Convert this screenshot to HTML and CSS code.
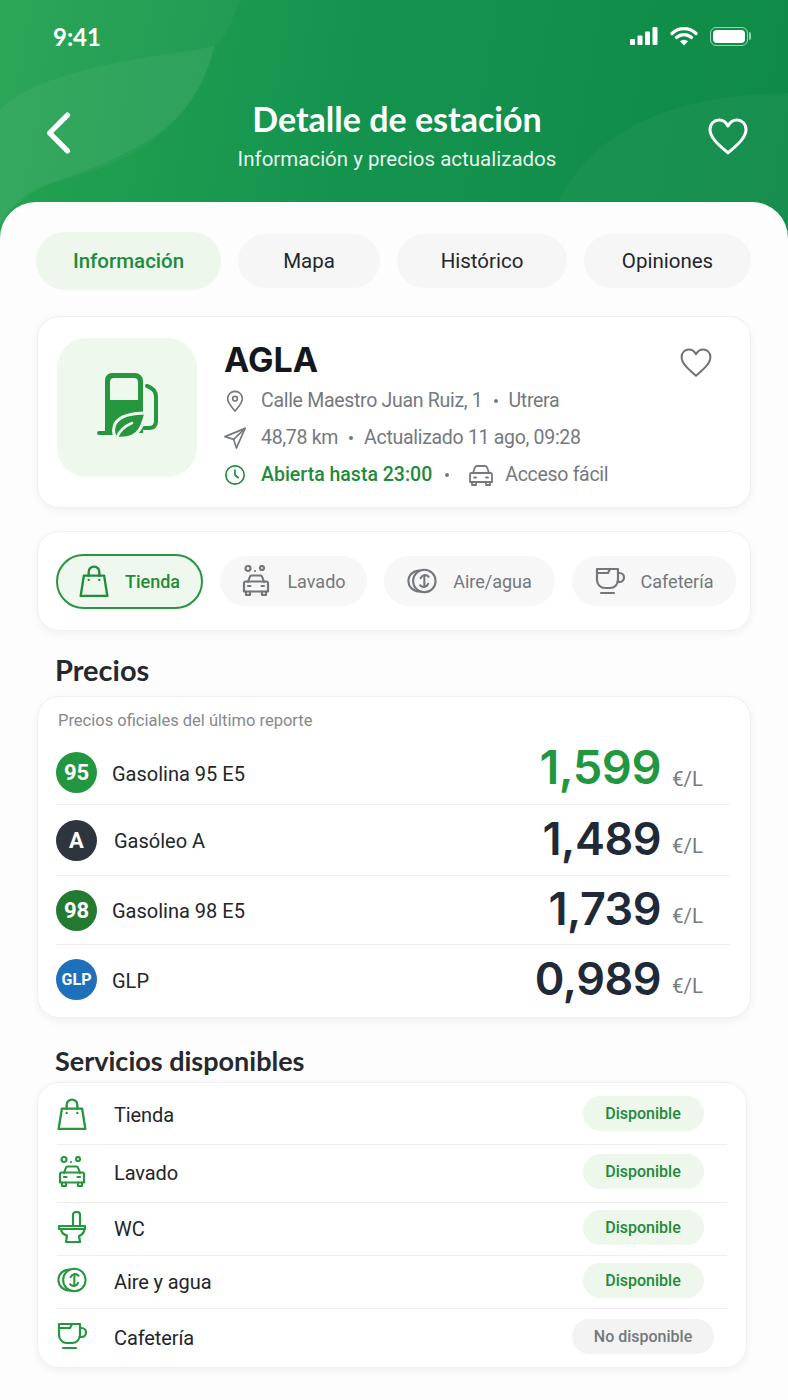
FILE: index.html
```html
<!doctype html>
<html lang="es">
  <head>
    <meta charset="UTF-8" />
    <title>Detalle de estación</title>
    <link rel="stylesheet" href="styles.css">
  </head>

  <body>
    <!-- iconos compartidos -->
    <svg class="sprite" xmlns="http://www.w3.org/2000/svg">
      <symbol id="i-heart" viewBox="0 0 40 40">
        <path d="M20 36C11 28 2 21 2 12.500 2 6.500 6.500 3 11 3c4 0 7 2 9 6 2-4 5-6 9-6 4.500 0 9 3.500 9 9.500C38 21 29 28 20 36z" />
      </symbol>
      <symbol id="i-pin" viewBox="0 0 24 24">
        <path d="M12 23c-4-5-8-9-8-13.500a8 8 0 0 1 16 0C20 14 16 18 12 23z" />
        <circle cx="12" cy="9.500" r="2.500" />
      </symbol>
      <symbol id="i-nav" viewBox="0 0 24 24">
        <path d="M23 1.500 1 10.500l9.500 3L13.500 23z" />
        <path d="M23 1.500 10.500 13.500" />
      </symbol>
      <symbol id="i-clock" viewBox="0 0 24 24">
        <circle cx="12" cy="12" r="10" />
        <path d="M12 6.500V12l3.500 3" />
      </symbol>
      <symbol id="i-car" viewBox="0 0 26 24">
        <path d="M5 10l1.800-5.200A2.500 2.500 0 0 1 9.200 3h7.600a2.500 2.500 0 0 1 2.400 1.800L21 10" />
        <path d="M3.500 10h19A1.500 1.500 0 0 1 24 11.500V19H2v-7.500A1.500 1.500 0 0 1 3.500 10z" />
        <path d="M4 19v3h4v-3M18 19v3h4v-3M6 14.500h2M18 14.500h2" />
      </symbol>
      <symbol id="i-bag" viewBox="0 0 28 30">
        <path d="M4.500 10h19l3 19H1.500z" />
        <path d="M9 10V6.500a5 5 0 0 1 10 0V10" />
        <path d="M9 14h.01M19 14h.01" />
      </symbol>
      <symbol id="i-wash" viewBox="0 0 26 32">
        <circle cx="5" cy="3.500" r="2.500" />
        <circle cx="19" cy="3" r="2" />
        <path d="M12 6h.01" />
        <path d="M5 17l1.800-5a2 2 0 0 1 1.900-1.500h8.600a2 2 0 0 1 1.900 1.500L21 17" />
        <path d="M2.500 16.500h21A1.500 1.500 0 0 1 25 18v8.500H1V18a1.500 1.500 0 0 1 1.500-1.500z" />
        <path d="M3 26.500v3.500h4v-3.500M19 26.500v3.500h4v-3.500M5 21h2.500M18.500 21H21" />
      </symbol>
      <symbol id="i-tyre" viewBox="0 0 32 32">
        <circle cx="18.500" cy="16" r="12" />
        <path d="M14 4.800C7 4.500 1.500 9.500 1.500 16S7 27.500 14 27.200" />
        <path d="M14.500 13a5 5 0 0 1 8.500-1.500M22.500 19a5 5 0 0 1-8.500 1.500" />
        <path d="M18.500 10v6M18.500 16v6" />
      </symbol>
      <symbol id="i-cup" viewBox="0 0 30 30">
        <path d="M2 3h21v11a8 8 0 0 1-8 8h-5a8 8 0 0 1-8-8z" />
        <path d="M2 7h11l2-4M23 7h1.500a4 4 0 0 1 0 9H22.500" />
        <path d="M6 27h13" />
      </symbol>
      <symbol id="i-wc" viewBox="0 0 28 32">
        <path d="M15 15V4a3 3 0 0 1 3-3h1a3 3 0 0 1 3 3v11" />
        <path d="M1 15h26v3H1z" />
        <path d="M3 18c.5 4 3.500 6 6 6.500L8 31h14l-1-6c3-1 5-3 5.500-7" />
      </symbol>
    </svg>

    <div class="phone">
      <header class="hero">
        <svg class="hero-shapes" viewBox="0 0 788 240" preserveAspectRatio="none" aria-hidden="true">
          <path class="shape-a" d="M0 0H240C232 22 226 38 215 45 190 135 130 165 40 186 20 195 8 210 0 225z" />
          <path class="shape-b" d="M0 110C25 82 90 68 130 60 175 52 205 50 215 45 200 110 160 140 100 165 60 182 25 185 0 225z" />
          <path class="shape-c" d="M545 240C560 170 620 95 788 93V240z" />
        </svg>

        <div class="status">
          <span class="time">9:41</span>
          <div class="status-icons">
            <svg class="signal" viewBox="0 0 28 18"><rect x="0" y="12" width="5" height="6" rx="1" /><rect x="7.500" y="8.500" width="5" height="9.500" rx="1" /><rect x="15" y="4.500" width="5" height="13.500" rx="1" /><rect x="22.500" y="0" width="5" height="18" rx="1" /></svg>
            <svg class="wifi" viewBox="0 0 28 20"><path d="M2 7.500a17 17 0 0 1 24 0M6.500 11.500a11 11 0 0 1 15 0" /><path class="wifi-dot" d="M14 19.500l-4-4.200a6 6 0 0 1 8 0z" /></svg>
            <div class="battery"><span></span></div>
          </div>
        </div>

        <div class="nav">
          <svg class="back" viewBox="0 0 24 40"><path d="M21 3 4 20l17 17" /></svg>
          <div class="nav-title">
            <h1>Detalle de estación</h1>
            <p>Información y precios actualizados</p>
          </div>
          <svg class="icon nav-heart"><use href="#i-heart" /></svg>
        </div>
      </header>

      <main class="sheet">
        <nav class="tabs">
          <a class="tab tab-active">Información</a>
          <a class="tab">Mapa</a>
          <a class="tab">Histórico</a>
          <a class="tab">Opiniones</a>
        </nav>

        <section class="card station">
          <div class="station-logo">
            <svg viewBox="0 0 66 66">
              <path class="pump" fill-rule="evenodd" d="M16 1h23a8 8 0 0 1 8 8v52H9V8a7 7 0 0 1 7-7zM18 6a4 4 0 0 0-4 4v18h28V10a4 4 0 0 0-4-4z" />
              <path class="pump-line" d="M3 61h20M51 14q9 3 9 11v24q0 7-7 7h-5" />
              <path class="leaf" d="M50 41C36 41 24 43 19 52c-2 5-2 10 1 14 12 1 20-2 24-9 3-5 4-10 6-16z" />
              <path class="vein" d="M21 65c3-7 8-11 15-14" />
            </svg>
          </div>
          <div class="station-info">
            <h2>AGLA</h2>
            <div class="info-line">
              <svg class="icon"><use href="#i-pin" /></svg>
              <span>Calle Maestro Juan Ruiz, 1</span>
              <span class="dot"></span>
              <span>Utrera</span>
            </div>
            <div class="info-line">
              <svg class="icon"><use href="#i-nav" /></svg>
              <span>48,78 km</span>
              <span class="dot"></span>
              <span>Actualizado 11 ago, 09:28</span>
            </div>
            <div class="info-line">
              <svg class="icon icon-green"><use href="#i-clock" /></svg>
              <span class="open">Abierta hasta 23:00</span>
              <span class="dot"></span>
              <svg class="icon icon-car"><use href="#i-car" /></svg>
              <span>Acceso fácil</span>
            </div>
          </div>
          <svg class="icon station-heart"><use href="#i-heart" /></svg>
        </section>

        <section class="card chips">
          <div class="chip chip-active"><svg class="icon chip-icon"><use href="#i-bag" /></svg>Tienda</div>
          <div class="chip"><svg class="icon chip-icon"><use href="#i-wash" /></svg>Lavado</div>
          <div class="chip"><svg class="icon chip-icon"><use href="#i-tyre" /></svg>Aire/agua</div>
          <div class="chip"><svg class="icon chip-icon"><use href="#i-cup" /></svg>Cafetería</div>
        </section>

        <h3 class="section-title title-big">Precios</h3>
        <section class="card prices">
          <p class="caption">Precios oficiales del último reporte</p>
          <div class="price-list">
            <div class="price-row">
              <span class="fuel fuel-95">95</span>
              <span class="fuel-name">Gasolina 95 E5</span>
              <span class="price price-best">1,599</span>
              <span class="unit">€/L</span>
            </div>
            <div class="price-row">
              <span class="fuel fuel-a">A</span>
              <span class="fuel-name">Gasóleo A</span>
              <span class="price">1,489</span>
              <span class="unit">€/L</span>
            </div>
            <div class="price-row">
              <span class="fuel fuel-98">98</span>
              <span class="fuel-name">Gasolina 98 E5</span>
              <span class="price">1,739</span>
              <span class="unit">€/L</span>
            </div>
            <div class="price-row">
              <span class="fuel fuel-glp">GLP</span>
              <span class="fuel-name">GLP</span>
              <span class="price">0,989</span>
              <span class="unit">€/L</span>
            </div>
          </div>
        </section>

        <h3 class="section-title services-title">Servicios disponibles</h3>
        <section class="card services">
          <div class="service-row">
            <svg class="icon service-icon"><use href="#i-bag" /></svg>
            <span class="service-name">Tienda</span>
            <span class="pill">Disponible</span>
          </div>
          <div class="service-row">
            <svg class="icon service-icon"><use href="#i-wash" /></svg>
            <span class="service-name">Lavado</span>
            <span class="pill">Disponible</span>
          </div>
          <div class="service-row">
            <svg class="icon service-icon"><use href="#i-wc" /></svg>
            <span class="service-name">WC</span>
            <span class="pill">Disponible</span>
          </div>
          <div class="service-row">
            <svg class="icon service-icon"><use href="#i-tyre" /></svg>
            <span class="service-name">Aire y agua</span>
            <span class="pill">Disponible</span>
          </div>
          <div class="service-row">
            <svg class="icon service-icon"><use href="#i-cup" /></svg>
            <span class="service-name">Cafetería</span>
            <span class="pill pill-off">No disponible</span>
          </div>
        </section>
      </main>
    </div>
  </body>
</html>
```

FILE: styles.css
```css
* {
  box-sizing: border-box;
}

body {
  margin: 0;
  font-family: "Roboto", "Noto Sans", sans-serif;
  color: #22262b;
}

h1,
h2,
h3,
p {
  margin: 0;
}

.sprite {
  display: none;
}

.phone {
  width: 788px;
  height: 1400px;
  overflow: hidden;
  background-color: #fdfdfd;
}

.icon {
  fill: none;
  stroke: currentColor;
  stroke-width: 1.800;
  stroke-linecap: round;
  stroke-linejoin: round;
}

/* cabecera */
.hero {
  position: relative;
  height: 240px;
  padding: 22px 36px 0 44px;
  color: white;
  background-image: linear-gradient(100deg, #25a350 0%, #14934f 45%, #0f8a47 100%);
}

.hero-shapes {
  position: absolute;
  top: 0;
  left: 0;
  width: 100%;
  height: 100%;
}

.shape-a {
  fill: rgba(255, 255, 255, 0.035);
}

.shape-b {
  fill: rgba(255, 255, 255, 0.05);
}

.shape-c {
  fill: rgba(255, 255, 255, 0.035);
}

.status {
  position: relative;
  display: flex;
  align-items: center;
  justify-content: space-between;
  height: 28px;
  padding-left: 9px;
}

.time {
  font-family: "Lato", sans-serif;
  font-size: 24px;
  font-weight: 700;
}

.status-icons {
  display: flex;
  align-items: center;
  gap: 12px;
  margin-right: 4px;
}

.signal {
  width: 28px;
  height: 18px;
  fill: white;
}

.wifi {
  width: 28px;
  height: 20px;
  fill: none;
  stroke: white;
  stroke-width: 3.200;
  stroke-linecap: round;
}

.wifi-dot {
  fill: white;
  stroke: none;
}

.battery {
  position: relative;
  width: 38px;
  height: 19px;
  padding: 2px;
  border: 1px solid rgba(255, 255, 255, 0.6);
  border-radius: 6px;
}

.battery span {
  display: block;
  width: 100%;
  height: 100%;
  background-color: white;
  border-radius: 4px;
}

.battery::after {
  content: "";
  position: absolute;
  top: 4px;
  right: -4px;
  width: 2px;
  height: 8px;
  background-color: rgba(255, 255, 255, 0.6);
  border-radius: 0 2px 2px 0;
}

.nav {
  position: relative;
  display: flex;
  align-items: center;
  justify-content: space-between;
  margin-top: 47px;
}

.back {
  width: 28px;
  height: 42px;
  margin-bottom: 9px;
  fill: none;
  stroke: white;
  stroke-width: 5;
  stroke-linecap: round;
  stroke-linejoin: round;
}

.nav-title {
  text-align: center;
  margin-left: 14px;
}

.nav-title h1 {
  font-family: "Lato", sans-serif;
  font-size: 34px;
  font-weight: 700;
  line-height: 44px;
}

.nav-title p {
  font-size: 20.500px;
  line-height: 36px;
  color: rgba(255, 255, 255, 0.92);
}

.nav-heart {
  width: 40px;
  height: 40px;
  margin-right: 4px;
  stroke-width: 3;
}

/* contenido */
.sheet {
  position: relative;
  margin-top: -38px;
  height: 1198px;
  padding: 30px 37px 0;
  background-color: #fdfdfd;
  border-radius: 36px 36px 0 0;
}

.tabs {
  display: grid;
  grid-template-columns: 185px 142px 170px 167px;
  column-gap: 17px;
  align-items: center;
  margin-left: -1px;
}

.tab {
  display: flex;
  align-items: center;
  justify-content: center;
  height: 54px;
  font-size: 20.500px;
  background-color: #f6f6f6;
  border-radius: 27px;
}

.tab-active {
  height: 58px;
  color: #1f8b3b;
  font-weight: 500;
  background-color: #edf7eb;
  border-radius: 29px;
}

.card {
  background-color: white;
  border: 1px solid #f0f0f0;
  border-radius: 22px;
  box-shadow: 0 3px 10px rgba(0, 0, 0, 0.05);
}

.station {
  display: flex;
  align-items: flex-start;
  width: 714px;
  height: 192px;
  margin-top: 26px;
  padding: 21px 38px 0 19px;
}

.station-logo {
  display: flex;
  align-items: center;
  justify-content: center;
  flex: none;
  width: 140px;
  height: 139px;
  padding: 0 0 6px 4px;
  background-color: #eef8ec;
  border-radius: 30px;
}

.station-logo svg {
  width: 66px;
  height: 66px;
}

.pump {
  fill: #27973f;
}

.pump-line {
  fill: none;
  stroke: #27973f;
  stroke-width: 4;
  stroke-linecap: round;
}

.leaf {
  fill: #27973f;
  stroke: #eef8ec;
  stroke-width: 3;
}

.vein {
  fill: none;
  stroke: #eef8ec;
  stroke-width: 2.500;
  stroke-linecap: round;
}

.station-info {
  flex: 1;
  margin-left: 27px;
}

.station-info h2 {
  font-family: "Inter", sans-serif;
  font-size: 34px;
  font-weight: 700;
  line-height: 44px;
  color: #14181d;
}

.info-line {
  display: flex;
  align-items: center;
  height: 37px;
  font-size: 19.500px;
  letter-spacing: -0.3px;
  color: #75797e;
}

.info-line .icon {
  flex: none;
  width: 22px;
  height: 22px;
  margin-right: 15px;
}

.info-line .icon-green,
.open {
  color: #1f8b3b;
}

.info-line .icon-car {
  width: 26px;
  height: 24px;
  margin-right: 11px;
}

.open {
  font-weight: 500;
  letter-spacing: 0;
}

.dot {
  flex: none;
  width: 4px;
  height: 4px;
  margin: 0 11px;
  background-color: #75797e;
  border-radius: 50%;
}

.open + .dot {
  margin: 0 19px 0 13px;
}

.chips {
  display: grid;
  grid-template-columns: 147px 147px 171px 164px;
  column-gap: 17px;
  align-items: center;
  width: 714px;
  height: 100px;
  margin-top: 23px;
  padding-left: 18px;
}

.chip {
  display: flex;
  align-items: center;
  justify-content: center;
  gap: 16px;
  height: 50px;
  font-size: 18px;
  color: #73777c;
  background-color: #f7f7f7;
  border-radius: 25px;
}

.chip-icon {
  width: 30px;
  height: 32px;
  stroke-width: 2.200;
}

.chip-active {
  height: 55px;
  color: #1f8b3b;
  font-weight: 500;
  background-color: #eff8ee;
  border: 2px solid #2a9440;
  border-radius: 28px;
}

.station-heart {
  width: 32px;
  height: 32px;
  margin-top: 9px;
  color: #6e7277;
  stroke-width: 2.500;
}

.section-title {
  margin: 23px 0 0 18px;
  font-family: "Lato", sans-serif;
  font-size: 27px;
  font-weight: 700;
  line-height: 32px;
  color: #25292e;
}

.title-big {
  font-size: 29px;
}

.prices {
  width: 714px;
  height: 322px;
  margin-top: 10px;
  padding: 13px 20px 0 18px;
}

.caption {
  height: 31px;
  padding-left: 2px;
  font-size: 16.500px;
  line-height: 22px;
  color: #85898e;
}

.price-list {
  display: grid;
  grid-template-rows: 64px 71px 69px 69px;
}

.price-row {
  display: flex;
  align-items: center;
  border-bottom: 1px solid #eeeeee;
}

.price-row:last-child {
  border-bottom: none;
}

.fuel {
  display: flex;
  align-items: center;
  justify-content: center;
  flex: none;
  width: 41px;
  height: 41px;
  font-size: 22px;
  font-weight: 700;
  color: white;
  border-radius: 50%;
}

.fuel-95 {
  background-color: #22973f;
}

.fuel-a {
  background-color: #2e353f;
}

.fuel-98 {
  background-color: #237a30;
}

.fuel-glp {
  font-size: 16px;
  background-color: #1f70bb;
}

.fuel-name {
  flex: 1;
  margin-left: 15px;
  padding-top: 2px;
  font-size: 20px;
}

.fuel-a + .fuel-name {
  margin-left: 17px;
}

.price {
  padding-bottom: 3px;
  font-family: "Inter", sans-serif;
  font-size: 45px;
  font-weight: 600;
  letter-spacing: -0.5px;
  color: #1f2937;
}

.price-best {
  padding-bottom: 12px;
  font-size: 47px;
  color: #22973f;
}

.unit {
  width: 69px;
  padding: 12px 0 0 11px;
  font-size: 20.500px;
  color: #777b80;
}

.services-title {
  margin-top: 27px;
}

.services {
  display: grid;
  grid-template-rows: 62px 58px 53px 53px 58px;
  width: 710px;
  height: 286px;
  margin-top: 5px;
  padding: 0 19px;
}

.service-row {
  display: grid;
  grid-template-columns: 57px 1fr 142px;
  align-items: center;
  padding: 0 13px 4px 0;
  font-size: 20px;
  letter-spacing: -0.1px;
  border-bottom: 1px solid #eeeeee;
}

.service-row:first-child {
  padding-bottom: 0;
}

.service-row:last-child {
  border-bottom: none;
}

.service-name {
  padding-top: 3px;
}

.service-icon {
  width: 30px;
  height: 32px;
  color: #27973f;
  stroke-width: 2.200;
}

.pill {
  justify-self: center;
  display: flex;
  align-items: center;
  justify-content: center;
  width: 121px;
  height: 35px;
  font-size: 16px;
  font-weight: 500;
  letter-spacing: 0;
  color: #23893a;
  background-color: #edf7eb;
  border-radius: 18px;
}

.pill-off {
  width: 142px;
  color: #74787d;
  background-color: #f3f3f4;
}
```
